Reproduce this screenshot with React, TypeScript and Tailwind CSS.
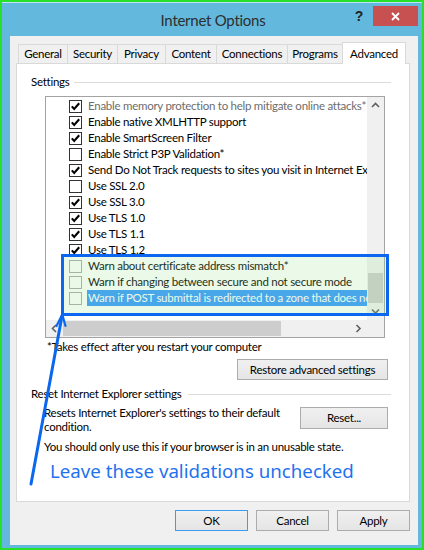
import React from "react";

type Row = { t: string; c?: boolean; dis?: boolean; light?: boolean; sel?: boolean };

const rows: Row[] = [
  { t: "Enable memory protection to help mitigate online attacks*", c: true, dis: true },
  { t: "Enable native XMLHTTP support", c: true },
  { t: "Enable SmartScreen Filter", c: true },
  { t: "Enable Strict P3P Validation*" },
  { t: "Send Do Not Track requests to sites you visit in Internet Explorer*", c: true },
  { t: "Use SSL 2.0" },
  { t: "Use SSL 3.0", c: true },
  { t: "Use TLS 1.0", c: true },
  { t: "Use TLS 1.1", c: true },
  { t: "Use TLS 1.2", c: true },
  { t: "Warn about certificate address mismatch*", light: true },
  { t: "Warn if changing between secure and not secure mode", light: true },
  { t: "Warn if POST submittal is redirected to a zone that does not permit posts", light: true, sel: true },
];

function Box({ checked, light }: { checked?: boolean; light?: boolean }) {
  return (
    <span
      className={`w-[13px] h-[13px] shrink-0 border bg-white flex items-center justify-center ${
        light ? "border-[#a7aca7]" : "border-[#333333]"
      }`}
    >
      {checked && (
        <svg width="11" height="11" viewBox="0 0 11 11">
          <path d="M1.8 5.4 L4.2 8 L9.2 2.2" fill="none" stroke="#000" strokeWidth="2.1" />
        </svg>
      )}
    </span>
  );
}

function Chevron({ dir }: { dir: "up" | "down" | "left" | "right" }) {
  const d =
    dir === "up"
      ? "M1 6 L4.5 2.5 L8 6"
      : dir === "down"
      ? "M1 2.5 L4.5 6 L8 2.5"
      : dir === "left"
      ? "M6 1 L2.5 4.5 L6 8"
      : "M2.5 1 L6 4.5 L2.5 8";
  return (
    <svg width="9" height="9" viewBox="0 0 9 9">
      <path d={d} fill="none" stroke="#606060" strokeWidth="1.6" />
    </svg>
  );
}

function Btn({ children, className }: { children: React.ReactNode; className: string }) {
  return (
    <div
      className={`flex items-center justify-center border bg-linear-to-b from-[#f0f0f0] to-[#e5e5e5] text-black ${className}`}
    >
      {children}
    </div>
  );
}

const tabs = [
  { n: "General", w: "w-[50px]" },
  { n: "Security", w: "w-[51px] -ml-px" },
  { n: "Privacy", w: "w-[49px] -ml-px" },
  { n: "Content", w: "w-[52px] -ml-px" },
  { n: "Connections", w: "w-[72px] -ml-px" },
  { n: "Programs", w: "w-[56px] -ml-px" },
];

export default function App() {
  return (
    <div className="relative w-[424px] h-[550px] bg-[#27e02a] p-[2px] font-['Lato',sans-serif] text-[11.5px] tracking-[-0.26px] text-black overflow-hidden">
      <div className="w-full h-full bg-[#62b9dd] border-t border-[#bfe3f2] flex flex-col">
        {/* title bar */}
        <div className="h-[33px] grid grid-cols-[1fr_auto_1fr] shrink-0">
          <div />
          <div className="pt-[7px] text-[15px] leading-[20px] text-[#2e2e2e] pl-[2px]">Internet Options</div>
          <div className="flex justify-end items-start pt-[3px] pr-[4px]">
            <div className="mr-[10px] font-['Liberation_Sans',sans-serif] font-bold text-[14px] leading-[20px] text-[#222]">?</div>
            <div className="w-[45px] h-[20px] bg-[#c75050] flex items-center justify-center">
              <svg width="9" height="9" viewBox="0 0 9 9">
                <path d="M1 1 L8 8 M8 1 L1 8" stroke="#fff" strokeWidth="1.8" />
              </svg>
            </div>
          </div>
        </div>

        {/* client area */}
        <div className="flex-1 ml-[8px] mr-[4px] mb-[3px] bg-[#f0f0f0] pt-[6px] pl-[6px] pr-[8px] flex flex-col">
          {/* tabs */}
          <div className="flex items-end h-[22px] pl-[2px] -mb-px relative z-10">
            {tabs.map((t) => (
              <div
                key={t.n}
                className={`h-[20px] border border-[#d9d9d9] bg-[#f0f0f0] flex items-center justify-center ${t.w}`}
              >
                {t.n}
              </div>
            ))}
            <div className="w-[64px] h-[22px] -ml-px border border-b-0 border-[#d9d9d9] bg-white flex items-start justify-center pt-[2px]">
              Advanced
            </div>
          </div>

          {/* panel */}
          <div className="h-[439px] border border-[#d9d9d9] bg-white flex flex-col pl-[14px] pr-[18px] pt-[10px]">
            <div className="h-[16px] flex items-center">
              <span>Settings</span>
              <div className="flex-1 h-px bg-[#dcdcdc] ml-[4px]" />
            </div>

            {/* list box */}
            <div className="ml-[14px] mt-[6px] w-[340px] h-[242px] border border-[#a3a3a3] flex flex-col">
              <div className="flex-1 flex min-h-0">
                <div className="flex-1 overflow-hidden pt-[1px]">
                  {rows.map((r) => (
                    <div key={r.t} className="h-[16px] flex items-center pl-[23px] whitespace-nowrap">
                      <Box checked={r.c} light={r.light} />
                      {r.sel ? (
                        <span className="ml-[5px] px-[1px] bg-[#3399ff] text-white leading-[16px]">{r.t}</span>
                      ) : (
                        <span className={`ml-[6px] ${r.dis ? "text-[#6d6d6d]" : "text-black"}`}>{r.t}</span>
                      )}
                    </div>
                  ))}
                </div>
                <div className="w-[17px] bg-[#f0f0f0] flex flex-col">
                  <div className="h-[17px] flex items-center justify-center">
                    <Chevron dir="up" />
                  </div>
                  <div className="flex-1 flex flex-col justify-end">
                    <div className="h-[30px] mx-[1px] bg-[#cdcdcd]" />
                  </div>
                  <div className="h-[17px] flex items-center justify-center">
                    <Chevron dir="down" />
                  </div>
                </div>
              </div>
              <div className="h-[17px] flex bg-[#f0f0f0]">
                <div className="w-[17px] flex items-center justify-center">
                  <Chevron dir="left" />
                </div>
                <div className="flex-1 flex items-stretch py-[1px]">
                  <div className="w-[218px] bg-[#cdcdcd]" />
                </div>
                <div className="w-[17px] flex items-center justify-center">
                  <Chevron dir="right" />
                </div>
                <div className="w-[17px]" />
              </div>
            </div>

            <div className="ml-[16px] mt-[1px] leading-[16px]">*Takes effect after you restart your computer</div>

            <Btn className="self-end mr-[3px] mt-[4px] w-[151px] h-[21px] border-[#acacac]">Restore advanced settings</Btn>

            <div className="mt-[6px] h-[16px] flex items-center">
              <span>Reset Internet Explorer settings</span>
              <div className="flex-1 h-px bg-[#dcdcdc] ml-[7px]" />
            </div>

            <div className="mt-[4px] ml-[13px] flex items-start">
              <div className="leading-[14px] whitespace-nowrap">
                Resets Internet Explorer's settings to their default
                <br />
                condition.
              </div>
              <Btn className="ml-auto mr-[3px] mt-[1px] w-[88px] h-[22px] border-[#acacac]">Reset...</Btn>
            </div>

            <div className="mt-[6px] ml-[13px] leading-[14px]">
              You should only use this if your browser is in an unusable state.
            </div>

            <div className="mt-[5px] ml-[19px] font-['Noto_Sans',sans-serif] text-[18.7px] tracking-normal leading-[24px] text-[#1f72ee]">
              Leave these validations unchecked
            </div>
          </div>

          {/* bottom buttons */}
          <div className="mt-[8px] flex justify-end gap-[8px]">
            <Btn className="w-[73px] h-[21px] border-[#3c9cf0]">OK</Btn>
            <Btn className="w-[73px] h-[21px] border-[#acacac]">Cancel</Btn>
            <Btn className="w-[73px] h-[21px] border-[#acacac]">Apply</Btn>
          </div>
        </div>
      </div>

      {/* annotation overlays */}
      <div className="absolute left-[61px] top-[254px] w-[328px] h-[62px] border-[3px] border-[#0b67f0] bg-[#9be38f]/20 pointer-events-none" />
      <svg className="absolute left-0 top-0 pointer-events-none" width="424" height="550" viewBox="0 0 424 550">
        <path d="M31 484 L62 316" stroke="#0b67f0" strokeWidth="3" strokeLinecap="round" fill="none" />
        <path d="M56.5 326 L62.3 314.5 L65.5 326" stroke="#0b67f0" strokeWidth="2.2" strokeLinecap="round" strokeLinejoin="round" fill="none" />
      </svg>
    </div>
  );
}
